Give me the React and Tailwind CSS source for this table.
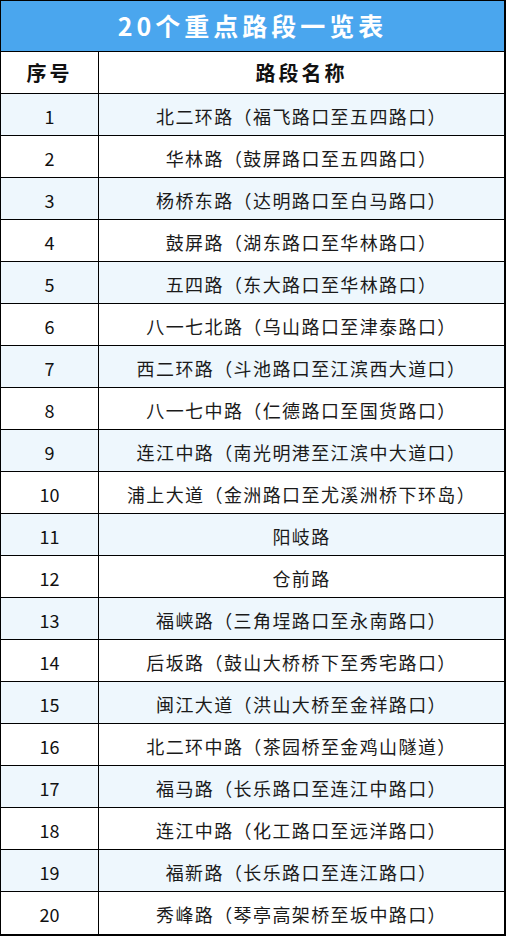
import React from "react";

const roads = [
  "北二环路（福飞路口至五四路口）",
  "华林路（鼓屏路口至五四路口）",
  "杨桥东路（达明路口至白马路口）",
  "鼓屏路（湖东路口至华林路口）",
  "五四路（东大路口至华林路口）",
  "八一七北路（乌山路口至津泰路口）",
  "西二环路（斗池路口至江滨西大道口）",
  "八一七中路（仁德路口至国货路口）",
  "连江中路（南光明港至江滨中大道口）",
  "浦上大道（金洲路口至尤溪洲桥下环岛）",
  "阳岐路",
  "仓前路",
  "福峡路（三角埕路口至永南路口）",
  "后坂路（鼓山大桥桥下至秀宅路口）",
  "闽江大道（洪山大桥至金祥路口）",
  "北二环中路（茶园桥至金鸡山隧道）",
  "福马路（长乐路口至连江中路口）",
  "连江中路（化工路口至远洋路口）",
  "福新路（长乐路口至连江路口）",
  "秀峰路（琴亭高架桥至坂中路口）",
];

const App = () => {
  return (
    <div
      className="w-[506px] h-[936px] bg-white border-l border-t border-r-2 border-b-2 border-black flex flex-col"
      style={{ fontFamily: '"Noto Sans CJK SC", "Noto Sans", sans-serif' }}
    >
      <div className="h-[51px] shrink-0 bg-[#4aa6ee] border-b border-black flex items-center justify-center text-white text-[25px] font-bold tracking-[4px]">
        20个重点路段一览表
      </div>

      <div className="h-[42px] shrink-0 flex border-b border-black text-[#111] text-[20px] font-bold tracking-[3px]">
        <div className="w-[98px] shrink-0 border-r border-black flex items-center justify-center">
          序号
        </div>
        <div className="flex-1 flex items-center justify-center">路段名称</div>
      </div>

      {roads.map((road, index) => (
        <div
          key={index}
          className={
            "h-[42px] shrink-0 flex " +
            (index < roads.length - 1 ? "border-b border-black " : "") +
            (index % 2 === 0 ? "bg-[#eef7fd]" : "bg-white")
          }
        >
          <div className="w-[98px] shrink-0 border-r border-black flex items-center justify-center pt-[3px] text-[18px] text-[#111]">
            {index + 1}
          </div>
          <div className="flex-1 flex items-center justify-center pt-[3px] text-[18px] tracking-[1.4px] text-[#1a1a1a]">
            {road}
          </div>
        </div>
      ))}
    </div>
  );
};

export default App;
